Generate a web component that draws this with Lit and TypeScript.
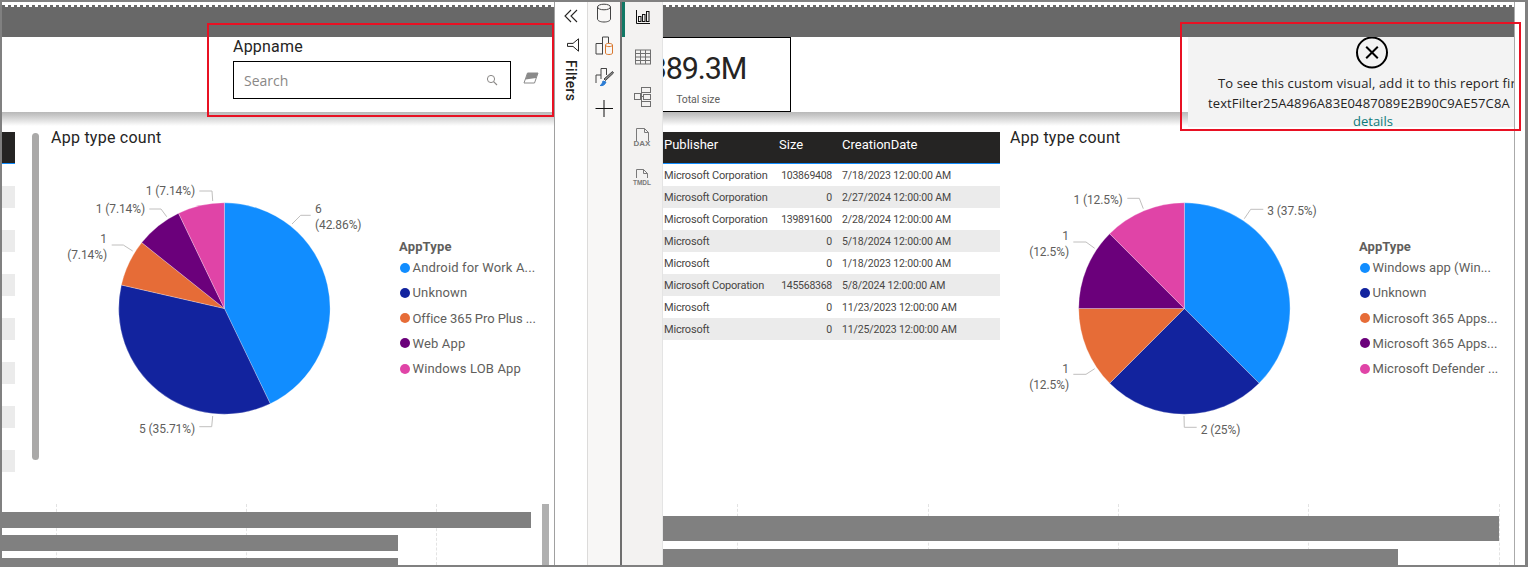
import { LitElement, html, css, svg } from "lit";
import { customElement } from "lit/decorators.js";

const COLORS = ["#118DFF", "#12239E", "#E66C37", "#6B007B", "#E044A7"];

type Lbl = { t: string; x: number; y: number; a: string };
type Chart = {
  x0: number; cx: number; cy: number; r: number; cls: string;
  values: number[];
  labels: Lbl[];
  leaders: string[];
  legend: string[];
};

const LEFT: Chart = {
  x0: 51, cx: 224.4, cy: 308.5, r: 105.7, cls: "ll",
  values: [6, 5, 1, 1, 1],
  labels: [
    { t: "6", x: 315, y: 208, a: "start" },
    { t: "(42.86%)", x: 315, y: 224, a: "start" },
    { t: "1 (7.14%)", x: 195, y: 190.5, a: "end" },
    { t: "1 (7.14%)", x: 145, y: 208.5, a: "end" },
    { t: "1", x: 107, y: 238, a: "end" },
    { t: "(7.14%)", x: 107, y: 254, a: "end" },
    { t: "5 (35.71%)", x: 195, y: 428, a: "end" },
  ],
  leaders: [
    "292,224 300.7,215.3 310.7,215.3",
    "199.3,191 212,191 212.7,201",
    "149.3,209 161,209 166.7,216.7",
    "111.7,245 123.3,245 132.7,251",
    "199.3,426.7 211.7,426.7 212.7,416",
  ],
  legend: ["Android for Work A...", "Unknown", "Office 365 Pro Plus ...", "Web App", "Windows LOB App"],
};

const RIGHT: Chart = {
  x0: 1010, cx: 1184.4, cy: 308.5, r: 105.7, cls: "lr",
  values: [3, 2, 1, 1, 1],
  labels: [
    { t: "3 (37.5%)", x: 1267.3, y: 210, a: "start" },
    { t: "1 (12.5%)", x: 1122.7, y: 199, a: "end" },
    { t: "1", x: 1069, y: 235, a: "end" },
    { t: "(12.5%)", x: 1069, y: 251, a: "end" },
    { t: "1", x: 1069, y: 368, a: "end" },
    { t: "(12.5%)", x: 1069, y: 384, a: "end" },
    { t: "2 (25%)", x: 1200.7, y: 429, a: "start" },
  ],
  leaders: [
    "1244.3,218.7 1250.7,209.3 1263.3,209.3",
    "1127.3,198.3 1139.3,198.3 1143.3,208.7",
    "1073.3,242 1086,242 1094.7,248.3",
    "1073.3,374.3 1086,374.3 1094.7,368.7",
    "1184,416 1184.3,427.3 1196.7,427.3",
  ],
  legend: ["Windows app (Win...", "Unknown", "Microsoft 365 Apps...", "Microsoft 365 Apps...", "Microsoft Defender ..."],
};

const ROWS = [
  ["Microsoft Corporation", "103869408", "7/18/2023 12:00:00 AM"],
  ["Microsoft Corporation", "0", "2/27/2024 12:00:00 AM"],
  ["Microsoft Corporation", "139891600", "2/28/2024 12:00:00 AM"],
  ["Microsoft", "0", "5/18/2024 12:00:00 AM"],
  ["Microsoft", "0", "1/18/2023 12:00:00 AM"],
  ["Microsoft Coporation", "145568368", "5/8/2024 12:00:00 AM"],
  ["Microsoft", "0", "11/23/2023 12:00:00 AM"],
  ["Microsoft", "0", "11/25/2023 12:00:00 AM"],
];

function slices(c: Chart) {
  const total = c.values.reduce((a, b) => a + b, 0);
  let acc = 0;
  return c.values.map((v, i) => {
    const a0 = (acc / total) * Math.PI * 2;
    acc += v;
    const a1 = (acc / total) * Math.PI * 2;
    const p = (a: number) => `${(c.cx + c.r * Math.sin(a)).toFixed(2)} ${(c.cy - c.r * Math.cos(a)).toFixed(2)}`;
    const large = a1 - a0 > Math.PI ? 1 : 0;
    return svg`<path d="M${c.cx} ${c.cy} L${p(a0)} A${c.r} ${c.r} 0 ${large} 1 ${p(a1)} Z" fill=${COLORS[i]} stroke="#fff" stroke-opacity="0.45" stroke-width="0.6"></path>`;
  });
}

function pie(c: Chart) {
  return html`<svg class="pie" viewBox="${c.x0} 170 340 270" width="340" height="270">
    ${slices(c)}
    ${c.leaders.map((p) => svg`<polyline points=${p} fill="none" stroke="#c0bfbe" stroke-width="1"></polyline>`)}
    ${c.labels.map((l) => svg`<text x=${l.x} y=${l.y + 4.5} text-anchor=${l.a} class="lbl">${l.t}</text>`)}
  </svg>`;
}

function chartBlock(c: Chart) {
  return html`<div class="chart">
    <div class="title">App type count</div>
    <div class="chart-row">
      ${pie(c)}
      <div class="legend ${c.cls}">
        <div class="leg-title">AppType</div>
        ${c.legend.map(
          (t, i) => html`<div class="leg-item"><span class="dot" style="background:${COLORS[i]}"></span><span>${t}</span></div>`
        )}
      </div>
    </div>
  </div>`;
}

function bars(list: [number, number][], grid: number[], extra: unknown = null, cls = "") {
  return html`<div class="bars ${cls}">
    ${grid.map((x) => html`<i class="gl" style="left:${x}px"></i>`)}
    ${list.map(([w, h]) => html`<div class="bar" style="width:${w}px;height:${h}px"></div>`)}
    ${extra}
  </div>`;
}

const band = html`<div class="band"><div class="dots"></div><div class="dark"></div></div>`;

@customElement("app-root")
export class AppRoot extends LitElement {
  static styles = css`
    :host { display: block; width: 1528px; height: 567px; overflow: hidden; }
    * { box-sizing: border-box; }
    .app {
      position: relative; width: 1528px; height: 567px; display: flex; background: #fff;
      border: 2px solid #808080; border-right-width: 3px;
      font-family: "Roboto", "Liberation Sans", sans-serif; color: #252423;
    }
    .canvas { position: relative; height: 563px; overflow: hidden; display: flex; flex-direction: column; flex: none; background: #fff; }
    .c1 { width: 552px; }
    .c2 { width: 851px; }
    .band { height: 35px; flex: none; display: flex; flex-direction: column; padding-top: 3px; }
    .dots { height: 2px; background: repeating-linear-gradient(90deg, #686868 0 3px, #fff 3px 6px); }
    .dark { flex: 1; background: #686868; }
    .head { height: 75px; flex: none; display: flex; position: relative; }
    .shadow { height: 14px; flex: none; background: linear-gradient(#b8b8b8, #c8c8c8 25%, #fff); }
    .body { height: 378px; flex: none; display: flex; padding-top: 6px; }
    /* slicer */
    .slicer { margin-left: 231px; width: 278px; flex: none; }
    .s-label { height: 20px; line-height: 20px; font-size: 16px; letter-spacing: 0.2px; color: #252423; }
    .s-box { margin-top: 4px; height: 38px; border: 1px solid #000; display: flex; align-items: center; justify-content: space-between; padding: 0 12px 0 10px; font-family: "Open Sans", sans-serif; font-size: 14px; color: #8a8886; }
    .eraser { margin: 35px 0 0 12px; }
    /* kpi */
    .kpi { margin-left: -58px; width: 186px; height: 75px; border: 1px solid #000; background: #fff; display: flex; flex-direction: column; align-items: center; flex: none; }
    .kpi-v { font-size: 30.5px; line-height: 36px; margin-top: 13px; letter-spacing: -1.1px; color: #252423; }
    .kpi-l { font-size: 10.5px; line-height: 14px; margin-top: 6px; color: #605e5c; letter-spacing: -0.1px; }
    .err { position: absolute; right: 0; top: 0; width: 326px; height: 90px; background: #f3f3f3; display: flex; flex-direction: column; align-items: flex-start; overflow: hidden; font-size: 13px; color: #252423; font-family: "Open Sans", sans-serif; z-index: 1; }
    .err-ic { margin-left: 167px; flex: none; }
    .err-t { white-space: nowrap; line-height: 20px; }
    .err-t1 { margin-left: 30px; margin-top: 2px; letter-spacing: 0.13px; }
    .err-t2 { margin-left: 20px; letter-spacing: 0.12px; }
    .err-d { color: #0e7a7a; line-height: 12px; margin-top: 2px; margin-left: 165px; }
    /* table */
    .tbl { flex: none; overflow: hidden; }
    .tbl-h { height: 32px; background: #252423; border-bottom: 1px solid #118dff; color: #fff; font-size: 13px; line-height: 26px; }
    .t-row { display: grid; grid-template-columns: 110px 58px 158px; padding-left: 1px; }
    .tbl-h > :nth-child(2) { padding-left: 5px; }
    .tbl-h > :nth-child(3) { padding-left: 10px; }
    .r { height: 22px; line-height: 24px; font-size: 11px; color: #484644; white-space: nowrap; }
    .r:nth-child(odd) { background: #ebebeb; }
    .r > :nth-child(1) { letter-spacing: -0.2px; }
    .r > :nth-child(2) { text-align: right; font-size: 10.5px; letter-spacing: -0.25px; }
    .r > :nth-child(3) { padding-left: 10px; font-size: 10.5px; letter-spacing: -0.13px; }
    .stub { width: 13px; }
    .rtbl { width: 337px; }
    .gutter { width: 10px; flex: none; }
    .sb { width: 7px; height: 327px; margin: 1px 12px 0 17px; background: #aaa9a8; border-radius: 4px; flex: none; }
    .chart { flex: none; margin-top: -5px; }
    .title { height: 22px; line-height: 22px; font-size: 16px; color: #252423; letter-spacing: 0.25px; }
    .chart-row { display: flex; margin-top: 21px; }
    .pie { display: block; flex: none; }
    .lbl { font-size: 12px; fill: #605e5c; font-family: "Roboto", sans-serif; letter-spacing: -0.1px; }
    .legend { margin-top: 68px; font-size: 13px; color: #605e5c; white-space: nowrap; }
    .ll { margin-left: 8px; letter-spacing: 0.15px; }
    .ll > :nth-child(4) { letter-spacing: -0.08px; }
    .lr { margin-left: 9px; letter-spacing: 0.03px; }
    .leg-title { height: 17px; line-height: 17px; font-weight: 700; }
    .leg-item { height: 25.25px; display: flex; align-items: center; gap: 2.5px; margin-left: 1px; }
    .dot { width: 10px; height: 10px; border-radius: 50%; flex: none; }
    /* bars */
    .bars { position: relative; height: 61px; flex: none; display: flex; flex-direction: column; gap: 7px; padding-top: 8px; overflow: hidden; }
    .bars.r2 { padding-top: 12px; gap: 8px; }
    .bar { background: #808080; flex: none; position: relative; }
    .gl { position: absolute; top: 0; bottom: 0; width: 0; border-left: 1px dashed #e3e3e3; }
    .vs { position: absolute; left: 540px; top: 0; bottom: 0; width: 7px; background: #b0b0b0; }
    /* rails */
    .line { width: 1px; flex: none; }
    .l-a { background: #a0a0a0; }
    .l-b { background: #dcdbda; }
    .l-c { background: #e4e4e4; }
    .l-d { background: #aaa; }
    .l-dark { width: 2px; background: #6e6e6e; flex: none; }
    .filters { width: 32px; flex: none; display: flex; flex-direction: column; align-items: center; background: #fff; }
    .f-chev { margin-top: 7px; }
    .f-fun { margin-top: 14.5px; margin-left: 4px; }
    .f-t { writing-mode: vertical-rl; font-size: 14px; font-weight: 500; line-height: 14px; margin-top: 8.5px; color: #252423; letter-spacing: 0.3px; }
    .data { width: 32px; flex: none; background: #f8f7f6; display: flex; flex-direction: column; gap: 10px; align-items: center; }
    .views { position: relative; width: 40px; flex: none; background: #f3f2f1; display: flex; flex-direction: column; gap: 16.5px; align-items: center; padding-top: 2px; }
    .views::before { content: ""; position: absolute; left: 0; top: 0; width: 3px; height: 35px; background: #117865; }
    .tail { width: 10px; flex: none; }
    svg { display: block; flex: none; }
    .ic-t { font-family: "Liberation Sans", sans-serif; font-weight: 700; fill: #7a7a7a; }
    .ic-d { font-size: 8px; }
    .ic-m { font-size: 6.5px; }
    .red { position: absolute; border: 2px solid #e81123; pointer-events: none; z-index: 5; }
    .red1 { left: 204.5px; top: 21px; width: 347.5px; height: 94px; }
    .red2 { left: 1178px; top: 20px; width: 341px; height: 109px; }
  `;

  render() {
    return html`<div class="app">
      <div class="canvas c1">
        ${band}
        <div class="head">
          <div class="slicer">
            <div class="s-label">Appname</div>
            <div class="s-box"><span>Search</span>
              <svg width="12" height="12" viewBox="0 0 12 12"><circle cx="5" cy="5" r="3.6" fill="none" stroke="#8a8886"/><path d="M7.6 7.6 11 11" stroke="#8a8886" stroke-width="1.1"/></svg>
            </div>
          </div>
          <svg class="eraser" width="16" height="12" viewBox="0 0 16 12"><path d="M4.500 1h10.500L11.500 11H1Z" fill="#fff" stroke="#8a8a8a"/><path d="M4.500 1h10.500L13 6 2.500 7.500Z" fill="#8a8a8a"/></svg>
        </div>
        <div class="shadow"></div>
        <div class="body">
          <div class="tbl stub">
            <div class="tbl-h"></div>
            ${[0, 1, 2, 3, 4, 5, 6, 7, 8, 9, 10, 11, 12, 13].map(() => html`<div class="r"></div>`)}
          </div>
          <div class="sb"></div>
          ${chartBlock(LEFT)}
        </div>
        ${bars([[529, 16], [396, 16], [396, 16]], [54, 244, 434], html`<div class="vs"></div>`)}
      </div>
      <div class="line l-a"></div>
      <div class="filters">
        <svg class="f-chev" width="16" height="14" viewBox="0 0 16 14" fill="none" stroke="#252423" stroke-width="1.1"><path d="M8 1 2 7l6 6M14 1 8 7l6 6"/></svg>
        <svg class="f-fun" width="14" height="14" viewBox="0 0 14 14" fill="none" stroke="#252423"><path d="M12.500 .8V13.200L7 8.400H1.500V5.400H7Z"/></svg>
        <div class="f-t">Filters</div>
      </div>
      <div class="line l-b"></div>
      <div class="data">
        <svg width="22" height="22" viewBox="0 0 22 22" fill="none" stroke="#444"><path d="M4.500 5v12c0 1.800 2.900 3 6.500 3s6.500-1.200 6.500-3V5"/><ellipse cx="11" cy="5" rx="6.500" ry="2.800"/></svg>
        <svg width="22" height="22" viewBox="0 0 22 22" fill="none" stroke="#444"><path d="M3 20V9.500h6.500M9.500 20V3h6v6M3 20h7"/><path d="M12.500 11c0-1 1.400-1.600 3.400-1.600s3.600.6 3.600 1.600v8c0 1-1.600 1.500-3.600 1.500s-3.400-.5-3.400-1.500Z M12.500 11c0 1 1.400 1.600 3.400 1.600s3.600-.6 3.600-1.600" stroke="#d9772e"/></svg>
        <svg width="22" height="22" viewBox="0 0 22 22" fill="none" stroke="#444"><path d="M3 17V9h5M8 13V2.500h5.500V9M13.500 2.500V7"/><path d="M19.500 5.500 11 13l1.500 1.500 8-7.500Z" fill="#888"/><path d="M7 19.500c1.500-.2 2.200-2 3-4.500l3 1c-.8 2.500-3 4.200-6 3.500Z" fill="#2b7cd3" stroke="#2b7cd3"/></svg>
        <svg width="22" height="22" viewBox="0 0 22 22" fill="none" stroke="#111"><path d="M2.500 10.500H20M11 2v17"/></svg>
      </div>
      <div class="line l-dark"></div>
      <div class="views">
        <svg width="24" height="24" viewBox="0 0 24 24" fill="none" stroke="#111"><path d="M6.500 6v13.500H20"/><rect x="8.500" y="12.500" width="2.500" height="5"/><rect x="12.500" y="10.500" width="2.500" height="7"/><rect x="16.500" y="7.500" width="2.500" height="10"/></svg>
        <svg width="24" height="24" viewBox="0 0 24 24" fill="none" stroke="#6f6f6f"><rect x="5.500" y="5" width="15" height="14"/><path d="M5.500 8.500h15M5.500 12h15M5.500 15.500h15M10.500 5v14M15.500 5v14"/></svg>
        <svg width="24" height="24" viewBox="0 0 24 24" fill="none" stroke="#6f6f6f"><rect x="11.500" y="2.500" width="9" height="5"/><rect x="4.500" y="8.500" width="6" height="6"/><rect x="13.500" y="9.500" width="7" height="5"/><rect x="11.500" y="16.500" width="9" height="5"/><path d="M10.500 11.500h3M11.500 7.500v9"/></svg>
        <svg width="26" height="24" viewBox="0 0 26 24" fill="none" stroke="#7a7a7a"><path d="M7.500 15V2.500h8l4 4V15M15.500 2.500v4h4"/><text x="13" y="19.500" text-anchor="middle" class="ic-t ic-d" stroke="none">DAX</text></svg>
        <svg width="26" height="24" viewBox="0 0 26 24" fill="none" stroke="#7a7a7a"><path d="M7.500 12V3.500h7l4 4V12M14.500 3.500v4h4"/><text x="13" y="18.500" text-anchor="middle" class="ic-t ic-m" stroke="none">TMDL</text></svg>
      </div>
      <div class="line l-c"></div>
      <div class="canvas c2">
        ${band}
        <div class="head">
          <div class="kpi">
            <div class="kpi-v">389.3M</div>
            <div class="kpi-l">Total size</div>
          </div>
          <div class="err">
            <svg class="err-ic" width="34" height="34" viewBox="0 0 34 34" fill="none" stroke="#000"><circle cx="17" cy="15.500" r="15" stroke-width="2"/><path d="M11.200 9.700l11.600 11.600M22.800 9.700 11.200 21.300" stroke-width="2"/></svg>
            <div class="err-t err-t1">To see this custom visual, add it to this report fir</div>
            <div class="err-t err-t2">textFilter25A4896A83E0487089E2B90C9AE57C8A</div>
            <div class="err-d">details</div>
          </div>
        </div>
        <div class="shadow"></div>
        <div class="body">
          <div class="tbl rtbl">
            <div class="tbl-h t-row"><span>Publisher</span><span>Size</span><span>CreationDate</span></div>
            ${ROWS.map((r) => html`<div class="r t-row"><span>${r[0]}</span><span>${r[1]}</span><span>${r[2]}</span></div>`)}
          </div>
          <div class="gutter"></div>
          ${chartBlock(RIGHT)}
        </div>
        ${bars([[836, 25], [735, 16]], [74, 265, 455, 645, 836], null, "r2")}
      </div>
      <div class="line l-d"></div>
      <div class="tail"></div>
      <div class="red red1"></div>
      <div class="red red2"></div>
    </div>`;
  }
}
